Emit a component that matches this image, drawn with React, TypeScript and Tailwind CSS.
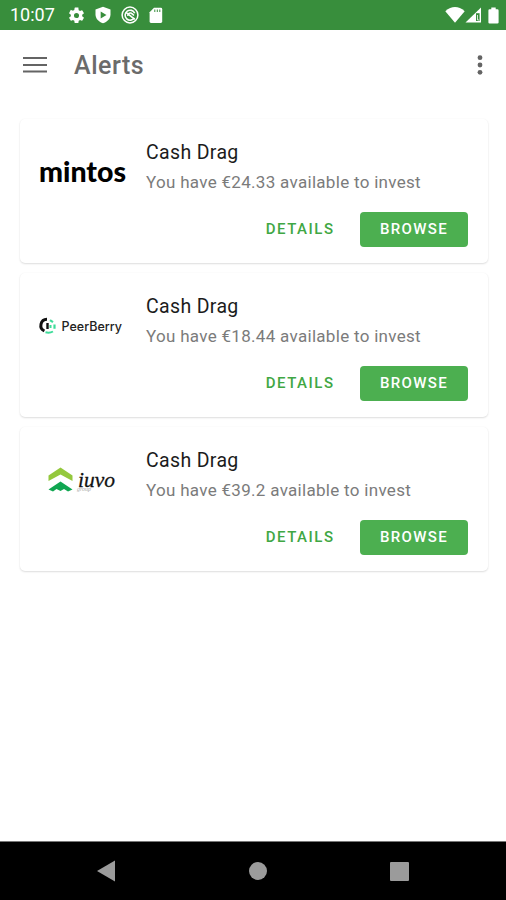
import React from 'react';

interface Alert {
  id: string;
  logo: React.ElementType;
  title: string;
  message: string;
}

const MintosLogo = () => (
  <svg viewBox="0 0 90 44" className="w-[90px] h-11">
    <text x="1" y="31.5" textLength="87" lengthAdjust="spacingAndGlyphs" fontFamily="Lato, sans-serif" fontWeight="900" fontSize="28" fill="#000">
      mintos
    </text>
  </svg>
);

const PeerBerryLogo = () => (
  <svg viewBox="0 0 90 44" className="w-[90px] h-11">
    <path d="M9 15.2A6.2 6.2 0 0 0 6.4 27" fill="none" stroke="#111" strokeWidth="3" />
    <path d="M9.5 19v6" stroke="#111" strokeWidth="2.4" />
    <path d="M12 16.2l3 2M16.5 20.5v4.2" fill="none" stroke="#3edc9a" strokeWidth="2.2" />
    <path d="M7.5 28.3q4 1.2 7.5-.8M12.5 21v3" fill="none" stroke="#3edc9a" strokeWidth="2" />
    <text x="23.5" y="27" textLength="60.5" lengthAdjust="spacingAndGlyphs" fontFamily="Inter, sans-serif" fontWeight="500" fontSize="12.5" fill="#222">
      PeerBerry
    </text>
  </svg>
);

const IuvoLogo = () => (
  <svg viewBox="0 0 90 44" className="w-[90px] h-11">
    <path d="M10.5 17.5L22.5 9.5L34.5 17.5V23L22.5 16.5L10.5 23Z" fill="#94c83d" />
    <path d="M10.5 31.5L22.5 23.5L34.5 31.5L30 33.5L26 31L22.5 33L18.5 31L15 33.5Z" fill="#10a651" />
    <text x="40" y="28.5" textLength="37" lengthAdjust="spacingAndGlyphs" fontFamily="Liberation Serif, serif" fontStyle="italic" fontSize="22" fill="#111" stroke="#111" strokeWidth="0.3">
      iuvo
    </text>
    <text x="39" y="33" textLength="14" lengthAdjust="spacingAndGlyphs" fontFamily="Liberation Serif, serif" fontStyle="italic" fontSize="6" fill="#aaa">
      group
    </text>
  </svg>
);

const alerts: Alert[] = [
  { id: 'mintos', logo: MintosLogo, title: 'Cash Drag', message: 'You have €24.33 available to invest' },
  { id: 'peerberry', logo: PeerBerryLogo, title: 'Cash Drag', message: 'You have €18.44 available to invest' },
  { id: 'iuvo', logo: IuvoLogo, title: 'Cash Drag', message: 'You have €39.2 available to invest' },
];

function StatusBar() {
  return (
    <div className="h-[30px] shrink-0 bg-[#388e3c] flex items-center justify-between pl-[10px] pr-[7px] text-white">
      <div className="flex items-center">
        <span className="w-[57px] text-[18px] leading-none">10:07</span>
        <svg viewBox="0 0 24 24" className="w-[19px] h-[19px] mr-2" fill="currentColor">
          <path d="M19.14 12.94c.04-.3.06-.61.06-.94s-.02-.64-.07-.94l2.03-1.58a.49.49 0 0 0 .12-.61l-1.92-3.32a.49.49 0 0 0-.59-.22l-2.39.96a7 7 0 0 0-1.62-.94l-.36-2.54A.48.48 0 0 0 13.92 2h-3.84a.47.47 0 0 0-.47.41l-.36 2.54a7.4 7.4 0 0 0-1.62.94l-2.39-.96a.47.47 0 0 0-.59.22L2.74 8.87a.48.48 0 0 0 .12.61l2.03 1.58a6.5 6.5 0 0 0 0 1.88l-2.03 1.58a.49.49 0 0 0-.12.61l1.92 3.32c.12.22.37.29.59.22l2.39-.96c.5.38 1.03.7 1.62.94l.36 2.54c.05.24.24.41.48.41h3.84c.24 0 .44-.17.47-.41l.36-2.54a7 7 0 0 0 1.62-.94l2.39.96c.22.08.47 0 .59-.22l1.92-3.32a.47.47 0 0 0-.12-.61zM12 15.2a3.2 3.2 0 1 1 0-6.4 3.2 3.2 0 0 1 0 6.4z" />
        </svg>
        <svg viewBox="0 0 18 18" className="w-[18px] h-[18px] mr-[9px]">
          <path d="M9 .8L16.5 3.5V8.5C16.5 13 13 16 9 17.2C5 16 1.5 13 1.5 8.5V3.5Z" fill="#fff" />
          <path d="M6.7 5.6L12.5 9L6.7 12.4Z" fill="#388e3c" />
        </svg>
        <svg viewBox="0 0 18 18" className="w-[18px] h-[18px] mr-[10px]" fill="none" stroke="currentColor">
          <circle cx="9" cy="9" r="7.9" strokeWidth="1.5" />
          <path d="M13.4 11.8A5 5 0 1 1 13.7 7.2" strokeWidth="1.6" />
          <path d="M5 6.3L13.8 13.4M6.8 9.8A2.5 2.5 0 0 1 11.2 7.9L13 9.5" strokeWidth="1.6" />
        </svg>
        <svg viewBox="0 0 14 17" className="w-[14px] h-[17px]">
          <path d="M5 .8H11.8Q13.2.8 13.2 2.2V14.6Q13.2 16 11.8 16H2Q.6 16 .6 14.6V5.2Z" fill="#fff" />
          <path d="M5.8 2.5V5M8.3 2.5V5M10.8 2.5V5" stroke="#388e3c" strokeWidth="1" />
        </svg>
      </div>
      <div className="flex items-center">
        <svg viewBox="0 0 20 16" className="w-5 h-4" fill="currentColor">
          <path d="M.3 4.2Q10-4 19.7 4.2L10 15.7Z" />
        </svg>
        <svg viewBox="0 0 17 16" className="w-[17px] h-4">
          <path d="M16 .4V15.5H.5Z" fill="#fff" />
          <path d="M14.6 6.2H11V14H14.6Z" fill="#388e3c" />
          <path d="M12.5 8V13H14" fill="none" stroke="#fff" strokeWidth=".8" />
        </svg>
        <svg viewBox="0 0 11 17" className="w-[11px] h-[17px] ml-[6px]" fill="currentColor">
          <path d="M3.3.5H7.7V2.2H9.4Q10.6 2.2 10.6 3.4V15.4Q10.6 16.5 9.4 16.5H1.6Q.4 16.5.4 15.4V3.4Q.4 2.2 1.6 2.2H3.3Z" />
        </svg>
      </div>
    </div>
  );
}

function AppBar() {
  return (
    <header className="h-[70px] shrink-0 flex items-center pl-[23px] pr-[23px] text-[#646464]">
      <svg viewBox="0 0 24 18" className="w-6 h-[18px]" fill="none" stroke="currentColor" strokeWidth="2">
        <path d="M0 2H24M0 9H24M0 15.5H24" />
      </svg>
      <h1 className="ml-[27px] text-[25px] leading-none font-medium tracking-[0.55px] text-[#6b6b6b]">Alerts</h1>
      <svg viewBox="0 0 6 20" className="w-[6px] h-5 ml-auto" fill="currentColor">
        <circle cx="3" cy="2.7" r="2.4" />
        <circle cx="3" cy="10" r="2.4" />
        <circle cx="3" cy="17.3" r="2.4" />
      </svg>
    </header>
  );
}

function AlertCard({ alert }: { alert: Alert }) {
  return (
    <section className="h-[144.3px] flex flex-col rounded-[5px] bg-white pl-[18px] pr-[20.5px] shadow-[0_1px_2px_rgba(0,0,0,0.13),0_0_2px_rgba(0,0,0,0.04)]">
      <div className="flex h-[93px]">
        <div className="pt-[31px]">
          <alert.logo />
        </div>
        <div className="pl-[18px] pt-[22px]">
          <h2 className="text-[19.5px] leading-6 tracking-[0.35px] text-[#1c1c1c]">{alert.title}</h2>
          <p className="mt-[7px] text-[17px] leading-5 tracking-[0.3px] text-[#7b7b7b] whitespace-nowrap">{alert.message}</p>
        </div>
      </div>
      <div className="flex justify-end gap-[15px] text-[15px] font-medium">
        <button className="h-[35px] px-[10px] tracking-[1.5px] text-[#3fa744]">DETAILS</button>
        <button className="h-[35px] w-[108px] rounded-[4px] bg-[#4caf50] pl-px tracking-[1.3px] text-white">BROWSE</button>
      </div>
    </section>
  );
}

function NavigationBar() {
  return (
    <nav className="h-[59px] shrink-0 border-t border-[#777] bg-black flex items-center pl-[96px] pr-[96px] justify-between">
      <svg viewBox="0 0 20 22" className="w-5 h-[22px]" fill="#9b9b9b">
        <path d="M1 11L19 .5V21.5Z" />
      </svg>
      <div className="w-[18px] h-[18px] ml-[10px] rounded-full bg-[#9b9b9b]" />
      <div className="w-[19px] h-[19px] mr-px rounded-[1px] bg-[#9b9b9b]" />
    </nav>
  );
}

export default function App() {
  return (
    <div className="w-[506px] h-[900px] flex flex-col overflow-hidden bg-white font-[Roboto,sans-serif]">
      <StatusBar />
      <AppBar />
      <main className="flex-1 flex flex-col gap-[10px] pt-[18.5px] pl-5 pr-[18px]">
        {alerts.map((alert) => (
          <AlertCard key={alert.id} alert={alert} />
        ))}
      </main>
      <NavigationBar />
    </div>
  );
}
